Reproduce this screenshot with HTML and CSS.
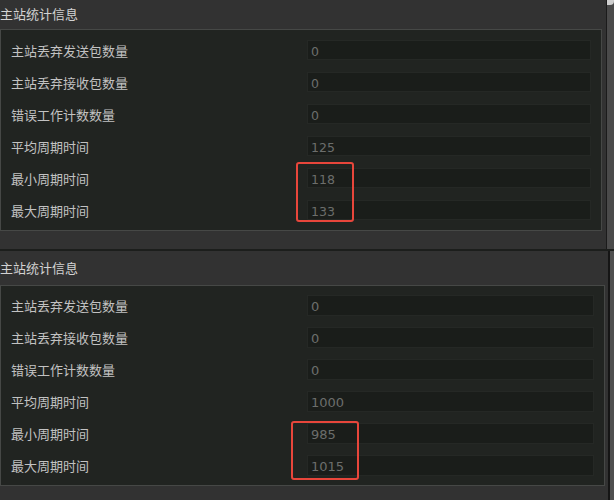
FILE: index.html
```html
<!DOCTYPE html>
<html lang="zh-CN">
<head>
    <meta charset="UTF-8">
    <title>主站统计信息</title>
    <link rel="stylesheet" href="styles.css">
</head>
<body>
    <div class="panel panel-a">
        <div class="conteudo">
            <div class="titulo">主站统计信息</div>
            <div class="grupo">
                <div class="linha"><span class="rotulo">主站丢弃发送包数量</span><div class="campo">0</div></div>
                <div class="linha"><span class="rotulo">主站丢弃接收包数量</span><div class="campo">0</div></div>
                <div class="linha"><span class="rotulo">错误工作计数数量</span><div class="campo">0</div></div>
                <div class="linha"><span class="rotulo">平均周期时间</span><div class="campo">125</div></div>
                <div class="linha"><span class="rotulo">最小周期时间</span><div class="campo">118</div></div>
                <div class="linha"><span class="rotulo">最大周期时间</span><div class="campo">133</div></div>
            </div>
        </div>
        <div class="barra"><span class="canto"></span></div>
        <div class="destaque"></div>
    </div>

    <div class="divisor"></div>

    <div class="panel panel-b">
        <div class="conteudo">
            <div class="titulo">主站统计信息</div>
            <div class="grupo">
                <div class="linha"><span class="rotulo">主站丢弃发送包数量</span><div class="campo">0</div></div>
                <div class="linha"><span class="rotulo">主站丢弃接收包数量</span><div class="campo">0</div></div>
                <div class="linha"><span class="rotulo">错误工作计数数量</span><div class="campo">0</div></div>
                <div class="linha"><span class="rotulo">平均周期时间</span><div class="campo">1000</div></div>
                <div class="linha"><span class="rotulo">最小周期时间</span><div class="campo">985</div></div>
                <div class="linha"><span class="rotulo">最大周期时间</span><div class="campo">1015</div></div>
            </div>
        </div>
        <div class="barra"></div>
        <div class="destaque"></div>
    </div>
</body>
</html>
```

FILE: styles.css
```css
body {
    margin: 0;
    padding: 0;
    background-color: #323232;
    font-family: "Noto Sans CJK SC", "DejaVu Sans", sans-serif;
    color: #c9c9c9;
    width: 614px;
    height: 500px;
    overflow: hidden;
}

.panel {
    position: relative;
    display: flex;
}

.conteudo {
    flex: 1;
}

.titulo {
    font-size: 13px;
    color: #d2d2d2;
    white-space: nowrap;
}

.grupo {
    background-color: #212421;
    border: 1px solid #464846;
    display: flex;
    flex-direction: column;
}

.linha {
    display: flex;
    align-items: center;
}

.rotulo {
    width: 296px;
    font-size: 13px;
    color: #c2c2c2;
    white-space: nowrap;
}

.campo {
    flex: 1;
    box-sizing: border-box;
    background-color: #1a1d1a;
    border: 1px solid #252825;
    font-family: "DejaVu Sans", sans-serif;
    color: #6c6e6c;
    padding-left: 3px;
    padding-top: 1px;
}

.destaque {
    position: absolute;
    border: 2px solid #e8463b;
    border-radius: 3px;
}

/* primeiro painel */
.panel-a {
    height: 249px;
}

.panel-a .titulo {
    height: 29px;
    line-height: 27px;
}

.panel-a .grupo {
    width: 580px;
    padding: 10px;
    gap: 12px;
}

.panel-a .campo {
    height: 20px;
    line-height: 19px;
    font-size: 12.5px;
}

.panel-a .barra {
    width: 7px;
    border-left: 1px solid #1b1b1b;
    background-color: #4a4a4a;
    position: relative;
}

.canto {
    position: absolute;
    top: 0;
    left: 0;
    width: 7px;
    height: 5px;
    background-color: #cfcfcf;
    border-bottom-right-radius: 4px;
}

.panel-a .destaque {
    left: 296px;
    top: 162px;
    width: 54px;
    height: 56px;
}

.divisor {
    height: 2px;
    background-color: #1c1e1c;
}

/* segundo painel */
.panel-b {
    height: 249px;
}

.panel-b .titulo {
    height: 34px;
    line-height: 34px;
}

.panel-b .grupo {
    width: 583px;
    padding: 9px 10px;
    gap: 11px;
}

.panel-b .campo {
    height: 21px;
    line-height: 20px;
    font-size: 13px;
}

.panel-b .barra {
    width: 4px;
    margin-left: 3px;
    border-left: 2px solid #151515;
    background-color: #4f4f4f;
}

.panel-b .destaque {
    left: 291px;
    top: 170px;
    width: 64px;
    height: 55px;
}
```
